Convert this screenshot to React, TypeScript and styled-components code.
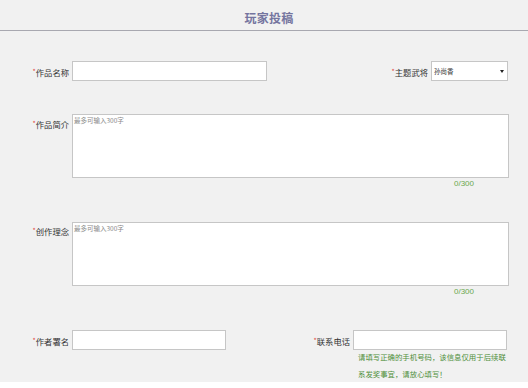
import React from "react";
import styled, { createGlobalStyle } from "styled-components";

const Global = createGlobalStyle`
  html, body { margin: 0; padding: 0; background: #f1f1f1; }
  body { font-family: "Liberation Sans", "Noto Sans CJK SC", sans-serif; }
`;

const Page = styled.div`
  width: 528px;
  height: 388px;
  background: #f1f1f1;
  display: flex;
  flex-direction: column;
  overflow: hidden;
`;

const Header = styled.div`
  height: 31px;
  border-bottom: 1px solid #a8a8b0;
  display: flex;
  align-items: center;
  justify-content: center;
  padding-left: 10px;
  padding-top: 4px;
  box-sizing: border-box;
  height: 32px;
`;

const Title = styled.h1`
  margin: 0;
  font-size: 12px;
  font-weight: bold;
  color: #75759f;
  font-family: "Noto Sans CJK SC", sans-serif;
  letter-spacing: 0.2px;
`;

const Form = styled.div`
  flex: 1;
  display: flex;
  flex-direction: column;
  padding: 30px 20px 0 0;
`;

const Row = styled.div<{ $top?: number }>`
  display: flex;
  justify-content: space-between;
  align-items: flex-start;
  margin-top: ${(p) => p.$top ?? 0}px;
`;

const Field = styled.div<{ $labelWidth?: number; $align?: string }>`
  display: flex;
  align-items: ${(p) => p.$align ?? "center"};
  gap: 3px;
`;

const Label = styled.label<{ $width?: number; $pad?: number }>`
  width: ${(p) => (p.$width ? `${p.$width}px` : "auto")};
  text-align: right;
  font-size: 8.3px;
  line-height: 12px;
  color: #333;
  padding-top: ${(p) => p.$pad ?? 0}px;
  font-family: "Noto Sans CJK SC", sans-serif;
  white-space: nowrap;
  flex-shrink: 0;
`;

const Star = styled.span`
  color: #e0483c;
  font-size: 7px;
  vertical-align: 2px;
`;

const TextInput = styled.input<{ $width: number }>`
  width: ${(p) => p.$width}px;
  height: 20px;
  box-sizing: border-box;
  border: 1px solid #c6c6c6;
  background: #fff;
  margin: 0;
  padding: 0 2px;
  outline: none;
`;

const SelectBox = styled.div`
  width: 77px;
  height: 20px;
  box-sizing: border-box;
  border: 1px solid #c6c6c6;
  background: #fff;
  display: flex;
  align-items: center;
  justify-content: space-between;
  padding: 0 3px 0 2px;
  font-size: 6.5px;
  color: #333;
  font-family: "Noto Sans CJK SC", sans-serif;
`;

const Arrow = styled.span`
  width: 0;
  height: 0;
  border-left: 2px solid transparent;
  border-right: 2px solid transparent;
  border-top: 3px solid #222;
`;

const TextArea = styled.textarea`
  width: 437px;
  height: 64px;
  box-sizing: border-box;
  border: 1px solid #c6c6c6;
  background: #fff;
  margin: 0;
  padding: 1px 1px;
  resize: none;
  outline: none;
  font-size: 6.5px;
  line-height: 9px;
  font-family: "Noto Sans CJK SC", sans-serif;
  &::placeholder {
    color: #8a8a8a;
  }
`;

const Counter = styled.div`
  align-self: flex-end;
  padding-right: 34px;
  font-size: 8px;
  line-height: 12px;
  color: #6aa84f;
  font-family: "Liberation Sans", sans-serif;
`;

const Column = styled.div`
  display: flex;
  flex-direction: column;
`;

const Helper = styled.div`
  width: 150px;
  padding-left: 5px;
  margin-top: -2px;
  font-size: 7.4px;
  line-height: 17px;
  color: #4f8f3a;
  font-family: "Noto Sans CJK SC", sans-serif;
`;

const Footer = styled.div`
  height: 6px;
  background: #fff;
`;

export default function App() {
  return (
    <>
      <Global />
      <Page>
        <Header>
          <Title>玩家投稿</Title>
        </Header>
        <Form>
          <Row>
            <Field>
              <Label $width={69}>
                <Star>*</Star>作品名称
              </Label>
              <TextInput $width={195} />
            </Field>
            <Field>
              <Label>
                <Star>*</Star>主题武将
              </Label>
              <SelectBox>
                <span>孙尚香</span>
                <Arrow />
              </SelectBox>
            </Field>
          </Row>
          <Row $top={33}>
            <Field $align="flex-start">
              <Label $width={69} $pad={3}>
                <Star>*</Star>作品简介
              </Label>
              <TextArea placeholder="最多可输入300字" />
            </Field>
          </Row>
          <Counter>0/300</Counter>
          <Row $top={32}>
            <Field $align="flex-start">
              <Label $width={69} $pad={2}>
                <Star>*</Star>创作理念
              </Label>
              <TextArea placeholder="最多可输入300字" />
            </Field>
          </Row>
          <Counter>0/300</Counter>
          <Row $top={32}>
            <Field>
              <Label $width={69}>
                <Star>*</Star>作者署名
              </Label>
              <TextInput $width={154} />
            </Field>
            <Field $align="flex-start">
              <Label $pad={4}>
                <Star>*</Star>联系电话
              </Label>
              <Column>
                <TextInput $width={154} />
                <Helper>
                  请填写正确的手机号码，该信息仅用于后续联系发奖事宜，请放心填写！
                </Helper>
              </Column>
            </Field>
          </Row>
        </Form>
        <Footer />
      </Page>
    </>
  );
}
